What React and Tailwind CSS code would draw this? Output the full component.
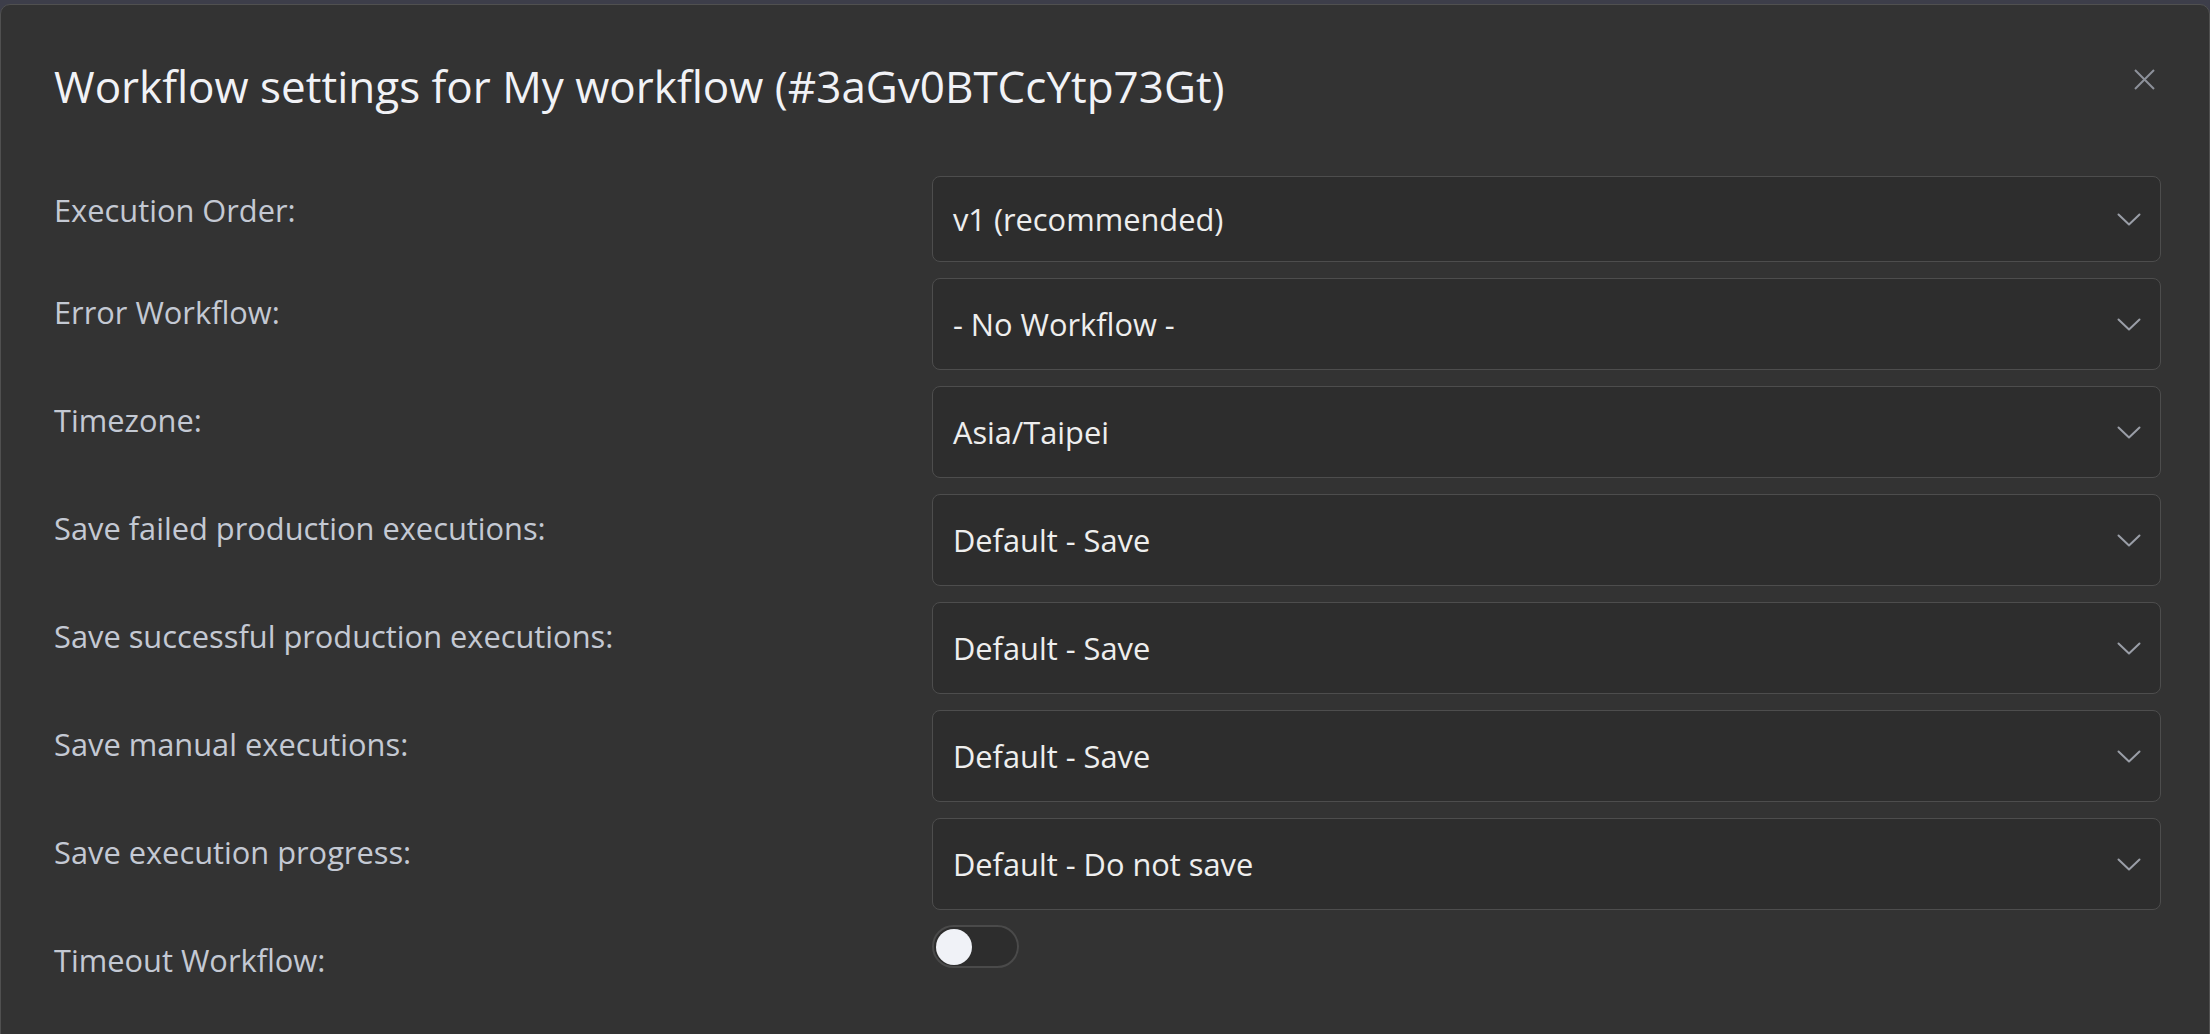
const ROWS = [
    { label: 'Execution Order:', value: 'v1 (recommended)', h: 'h-[86px]' },
    { label: 'Error Workflow:', value: '- No Workflow -', h: 'h-[92px]' },
    { label: 'Timezone:', value: 'Asia/Taipei', h: 'h-[92px]' },
    { label: 'Save failed production executions:', value: 'Default - Save', h: 'h-[92px]' },
    { label: 'Save successful production executions:', value: 'Default - Save', h: 'h-[92px]' },
    { label: 'Save manual executions:', value: 'Default - Save', h: 'h-[92px]' },
    { label: 'Save execution progress:', value: 'Default - Do not save', h: 'h-[92px]' },
];

function Chevron() {
    return (
        <svg width="24" height="13" viewBox="0 0 24 13" fill="none" className="shrink-0">
            <polyline points="1.5,1.5 12,11.5 22.5,1.5" stroke="#9a9ea7" strokeWidth="2" strokeLinecap="round" strokeLinejoin="round" />
        </svg>
    );
}

function SelectBox({ value, h }) {
    return (
        <div className={`${h} w-full flex items-center justify-between rounded-lg border border-[#4d4d4d] bg-[#2d2d2d] pl-5 pr-[19px]`}>
            <span className="text-[30.8px] leading-[44px] text-[#eeeeee]">{value}</span>
            <Chevron />
        </div>
    );
}

function SettingRow({ label, children }) {
    return (
        <div className="flex mb-4">
            <div className="w-5/12 shrink-0 pt-[12px] text-[30.8px] leading-[44px] text-[#c4c9d3]">{label}</div>
            <div className="w-7/12">{children}</div>
        </div>
    );
}

export default function App() {
    return (
        <div className="w-[2210px] h-[1034px] overflow-hidden bg-[#3d3e4a] pt-[4px]" style={{ fontFamily: '"Open Sans", "Noto Sans", sans-serif' }}>
            <div className="min-h-[1100px] rounded-t-[10px] border border-[#505050] bg-[#333333] pl-[53px] pr-[48px]">
                <div className="flex items-start justify-between pt-[54px]">
                    <h1 className="text-[44px] leading-[54px] text-[#f1f2f6]">
                        Workflow settings for My workflow (#3aGv0BTCcYtp73Gt)
                    </h1>
                    <button type="button" className="mt-[10px] mr-[6px] w-[21px] h-[21px]">
                        <svg width="21" height="21" viewBox="0 0 21 21" fill="none">
                            <path d="M1 1 L20 20 M20 1 L1 20" stroke="#8d919a" strokeWidth="2" />
                        </svg>
                    </button>
                </div>

                <div className="mt-[63px]">
                    {ROWS.map((r) => (
                        <SettingRow key={r.label} label={r.label}>
                            <SelectBox value={r.value} h={r.h} />
                        </SettingRow>
                    ))}
                    <SettingRow label="Timeout Workflow:">
                        <div className="w-[87px] h-[43px] -mt-px rounded-full border-2 border-[#4a4a4a] bg-[#2d2d2d] flex items-center pl-[2px]">
                            <div className="w-[36px] h-[36px] rounded-full bg-[#f0f2f7]" />
                        </div>
                    </SettingRow>
                </div>
            </div>
        </div>
    );
}
